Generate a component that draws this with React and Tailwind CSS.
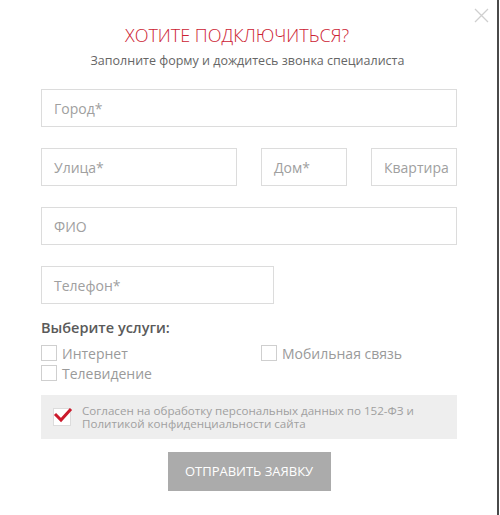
import React from "react";

function Field({ label, className }) {
  return (
    <div className={"h-[38px] border border-[#dcdcdc] flex items-center pl-[12px] overflow-hidden whitespace-nowrap text-[14px] text-[#a0a0a0] " + className}>
      {label}
    </div>
  );
}

function Box({ label }) {
  return (
    <div className="flex items-center gap-[5px] h-[20px]">
      <div className="w-[16px] h-[16px] border border-[#cfcfcf] bg-white" />
      <span className="text-[14px] text-[#9a9a9a]">{label}</span>
    </div>
  );
}

export default function App() {
  return (
    <div className="w-[500px] h-[515px] bg-white flex relative" style={{ fontFamily: '"Open Sans", "Noto Sans", sans-serif' }}>
      <div className="flex-1 min-w-0 relative">
        <svg className="absolute left-[474px] top-[8px]" width="15" height="15" viewBox="0 0 15 15">
          <path d="M1 1L14 14M14 1L1 14" stroke="#cfcfcf" strokeWidth="1.3" />
        </svg>
        <div className="pl-[41px] pr-[40px] pt-[22px] flex flex-col">
          <h1 className="text-center text-[18px] leading-[26px] font-light text-[#cc2233] ml-[-24px]">ХОТИТЕ ПОДКЛЮЧИТЬСЯ?</h1>
          <p className="text-center text-[12.5px] leading-[18px] text-[#666] mt-[4px] ml-[-3px]">Заполните форму и дождитесь звонка специалиста</p>
          <Field label="Город*" className="mt-[19px] w-full" />
          <div className="flex mt-[21px]">
            <Field label="Улица*" className="w-[196px]" />
            <Field label="Дом*" className="w-[86px] ml-[24px]" />
            <Field label="Квартира" className="w-[86px] ml-[24px]" />
          </div>
          <Field label="ФИО" className="mt-[21px] w-full" />
          <Field label="Телефон*" className="mt-[21px] w-[233px]" />
          <div className="mt-[14px] text-[14.5px] leading-[20px] font-semibold text-[#5a5a5a]">Выберите услуги:</div>
          <div className="grid grid-cols-[220px_1fr] mt-[5px]">
            <Box label="Интернет" />
            <Box label="Мобильная связь" />
            <Box label="Телевидение" />
          </div>
          <div className="mt-[12px] h-[44px] bg-[#eeeeee] flex items-center pl-[12px]">
            <div className="w-[18px] h-[18px] border border-[#dcdcdc] bg-white relative shrink-0">
              <svg className="absolute left-[-1px] top-[-3px]" width="20" height="18" viewBox="0 0 20 18">
                <path d="M2 8L8 14L18 3" stroke="#cc1a2c" strokeWidth="3" fill="none" />
              </svg>
            </div>
            <div className="ml-[11px] text-[11.6px] leading-[13.5px] text-[#a0a0a0]">
              Согласен на обработку персональных данных по 152-ФЗ и<br />Политикой конфиденциальности сайта
            </div>
          </div>
          <div className="flex justify-center mt-[13px]">
            <div className="w-[163px] h-[39px] bg-[#ababab] flex items-center justify-center text-white text-[13px]">ОТПРАВИТЬ ЗАЯВКУ</div>
          </div>
        </div>
      </div>
      <div className="w-[3px] shrink-0 flex">
        <div className="w-[2px] bg-[#4a4a4a]" />
        <div className="w-[1px] bg-white" />
      </div>
    </div>
  );
}
